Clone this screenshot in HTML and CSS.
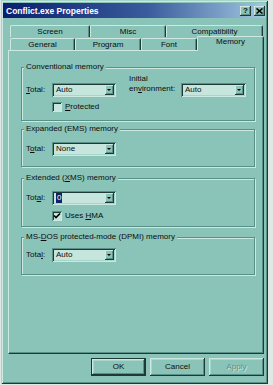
FILE: index.html
```html
<!DOCTYPE html>
<html lang="en">
<head>
  <meta charset="UTF-8" />
  <title>Conflict.exe Properties</title>
  <link rel="stylesheet" href="styles.css">
</head>
<body>
  <div class="window">
    <div class="titlebar">
      <span class="title">Conflict.exe Properties</span>
      <div class="caption-btns">
        <span class="cap-btn">?</span>
        <span class="cap-btn close">
          <svg width="7" height="6" viewBox="0 0 7 6"><path d="M0.5 0.5 L6.5 5.5 M6.5 0.5 L0.5 5.5" stroke="#000" stroke-width="1.6"/></svg>
        </span>
      </div>
    </div>

    <!-- tabs: back row first, selected row in front -->
    <div class="tab-row tabs-back">
      <div class="tab t-screen">Screen</div>
      <div class="tab t-misc">Misc</div>
      <div class="tab t-compat">Compatibility</div>
    </div>
    <div class="tab-row tabs-front">
      <div class="tab t-general">General</div>
      <div class="tab t-program">Program</div>
      <div class="tab t-font">Font</div>
      <div class="tab t-memory active">Memory</div>
    </div>

    <div class="panel">
      <fieldset class="group g-conv">
        <legend>Conventional memory</legend>
        <div class="row">
          <span class="lbl"><u>T</u>otal:</span>
          <div class="combo"><span class="val">Auto</span><span class="arrow"></span></div>
          <span class="lbl lbl-env">Initial<br>en<u>v</u>ironment:</span>
          <div class="combo combo-env"><span class="val">Auto</span><span class="arrow"></span></div>
        </div>
        <div class="check-row">
          <span class="check"></span>
          <span><u>P</u>rotected</span>
        </div>
      </fieldset>

      <fieldset class="group g-ems">
        <legend>Expanded (EMS) memory</legend>
        <div class="row">
          <span class="lbl">T<u>o</u>tal:</span>
          <div class="combo"><span class="val">None</span><span class="arrow"></span></div>
        </div>
      </fieldset>

      <fieldset class="group g-xms">
        <legend>Extended (<u>X</u>MS) memory</legend>
        <div class="row">
          <span class="lbl">Tot<u>a</u>l:</span>
          <div class="combo"><span class="val"><span class="sel">0</span></span><span class="arrow"></span></div>
        </div>
        <div class="check-row">
          <span class="check checked">
            <svg width="8" height="8" viewBox="0 0 8 8"><path d="M1 3.5 L3 5.5 L7 1.5" fill="none" stroke="#000" stroke-width="1.6"/></svg>
          </span>
          <span>Uses <u>H</u>MA</span>
        </div>
      </fieldset>

      <fieldset class="group g-dpmi">
        <legend>MS-<u>D</u>OS protected-mode (DPMI) memory</legend>
        <div class="row">
          <span class="lbl">Tota<u>l</u>:</span>
          <div class="combo"><span class="val">Auto</span><span class="arrow"></span></div>
        </div>
      </fieldset>
    </div>

    <div class="buttons">
      <span class="btn default">OK</span>
      <span class="btn">Cancel</span>
      <span class="btn disabled">Apply</span>
    </div>
  </div>
</body>
</html>
```

FILE: styles.css
```css
* {
  box-sizing: border-box;
}

body {
  margin: 0;
  background: #dfe8e5;
  font-family: "Liberation Sans", Arial, sans-serif;
  font-size: 8px;
  color: #0c0c0c;
}

.window {
  margin-left: 1px;
  width: 267px;
  height: 384px;
  padding: 3px 2px 2px 2px;
  background: #8ac3b8;
  box-shadow: inset 1px 1px 0 #a8d4ca, inset -1px -1px 0 #1e3a36,
              inset 2px 2px 0 #cce8e0, inset -2px -2px 0 #5a9088;
}

.titlebar {
  display: flex;
  align-items: center;
  height: 15px;
  padding: 0 1px 0 3px;
  background: linear-gradient(to right, #0a1e6e, #3a5c9c 55%, #a4c8e2);
}

.title {
  flex: 1;
  color: #fff;
  font-weight: bold;
  font-size: 8.5px;
}

.caption-btns {
  display: flex;
  gap: 3px;
}

.cap-btn {
  display: flex;
  align-items: center;
  justify-content: center;
  width: 11px;
  height: 10px;
  background: #8ac3b8;
  font-weight: bold;
  font-size: 8px;
  line-height: 1;
  box-shadow: inset -1px -1px 0 #1e3a36, inset 1px 1px 0 #cce8e0,
              inset -2px -2px 0 #5a9088;
}

/* tabs */
.tab-row {
  display: flex;
  padding-left: 7px;
}

.tabs-back {
  margin-top: 7px;
  height: 12px;
}

.tabs-front {
  height: 13px;
  align-items: flex-end;
}

.tab {
  height: 12px;
  padding-top: 1px;
  line-height: 10px;
  text-align: center;
  border: 1px solid #cce8e0;
  border-right-color: #1e3a36;
  border-bottom: none;
  border-radius: 2px 2px 0 0;
  box-shadow: inset -1px 0 0 #5a9088;
}

.tabs-back .tab {
  padding-top: 1px;
}

.t-screen { width: 80px; }
.t-misc { width: 76px; }
.t-compat { width: 97px; }
.t-general { width: 65px; }
.t-program { width: 66px; }
.t-font { width: 56px; }
.t-memory { width: 67px; }

.tab.active {
  position: relative;
  z-index: 1;
  height: 15px;
  margin-bottom: -1px;
  padding-top: 0;
  background: #8ac3b8;
}

.panel {
  margin-left: 5px;
  width: 256px;
  height: 304px;
  padding: 11px 8px 0 12px;
  border: 1px solid #cce8e0;
  border-right-color: #1e3a36;
  border-bottom-color: #1e3a36;
  box-shadow: inset -1px -1px 0 #5a9088;
}

/* group boxes */
.group {
  margin: 0;
  min-width: 0;
  padding: 2px 4px 8px 4px;
  border: 1px solid #5a9088;
  box-shadow: inset 1px 1px 0 #cce8e0, 1px 1px 0 #cce8e0;
}

.group legend {
  margin-left: -2px;
  padding: 0 2px;
  line-height: 10px;
  background: #8ac3b8;
}

.g-ems {
  margin-top: 3px;
  padding-top: 8px;
  padding-bottom: 10px;
}

.g-xms {
  margin-top: 6px;
  padding-top: 8px;
  padding-bottom: 5px;
}

.g-dpmi {
  margin-top: 5px;
  padding-top: 6px;
  padding-bottom: 12px;
}

.row {
  display: flex;
  align-items: flex-end;
}

.lbl {
  width: 26px;
  line-height: 14px;
  white-space: nowrap;
}

.lbl-env {
  width: 52px;
  margin-left: 13px;
  padding-bottom: 3px;
  line-height: 10px;
}

.combo {
  display: flex;
  align-items: center;
  justify-content: space-between;
  width: 64px;
  height: 14px;
  padding: 2px;
  background: #c6e5dd;
  box-shadow: inset 1px 1px 0 #5a9088, inset -1px -1px 0 #cce8e0,
              inset 2px 2px 0 #1e3a36, inset -2px -2px 0 #a8d4ca;
}

.combo-env {
  width: 65px;
}

.val {
  padding-left: 2px;
  line-height: 10px;
}

.sel {
  display: inline-block;
  padding: 0 1px;
  background: #0a246a;
  color: #fff;
}

.arrow {
  position: relative;
  width: 9px;
  height: 10px;
  background: #8ac3b8;
  box-shadow: inset -1px -1px 0 #1e3a36, inset 1px 1px 0 #cce8e0,
              inset -2px -2px 0 #5a9088;
}

.arrow::after {
  content: "";
  position: absolute;
  left: 2px;
  top: 4px;
  border-left: 2px solid transparent;
  border-right: 2px solid transparent;
  border-top: 2px solid #000;
}

.check-row {
  display: flex;
  align-items: center;
  gap: 3px;
  margin: 5px 0 0 26px;
  height: 10px;
  line-height: 10px;
}

.g-xms .check-row {
  margin-top: 6px;
}

.check {
  display: flex;
  align-items: center;
  justify-content: center;
  width: 10px;
  height: 10px;
  background: #c6e5dd;
  box-shadow: inset 1px 1px 0 #5a9088, inset -1px -1px 0 #cce8e0,
              inset 2px 2px 0 #1e3a36;
}

/* dialog buttons */
.buttons {
  display: flex;
  justify-content: flex-end;
  gap: 4px;
  margin-top: 4px;
  padding-right: 2px;
}

.btn {
  width: 55px;
  height: 18px;
  line-height: 18px;
  text-align: center;
  background: #8ac3b8;
  box-shadow: inset -1px -1px 0 #1e3a36, inset 1px 1px 0 #cce8e0,
              inset -2px -2px 0 #5a9088, inset 2px 2px 0 #a8d4ca;
}

.btn.default {
  border: 1px solid #1e3a36;
  line-height: 16px;
}

.btn.disabled {
  color: #5a9088;
  text-shadow: 1px 1px 0 #cce8e0;
}
```
